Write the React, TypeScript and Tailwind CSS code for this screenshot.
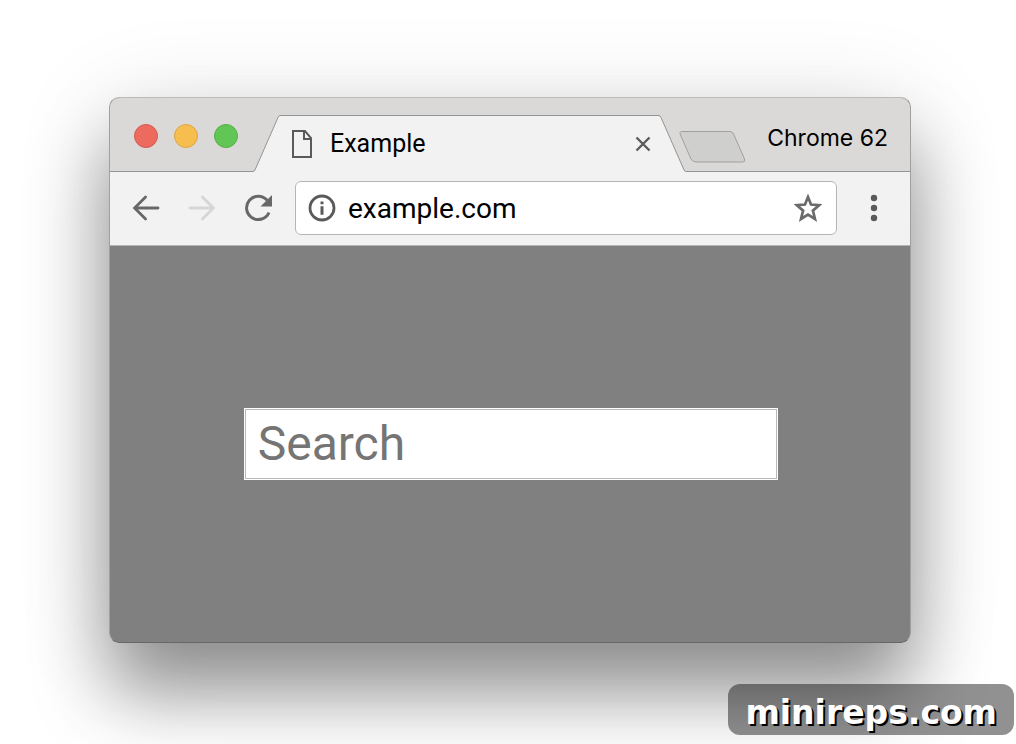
import React from "react";

function TrafficLights() {
  return (
    <div className="flex gap-4 pt-[26px] pl-6">
      <button type="button" aria-label="Close window" className="size-6 rounded-full border border-[#d6584f] bg-[#ed6a5f]" />
      <button type="button" aria-label="Minimize window" className="size-6 rounded-full border border-[#dba542] bg-[#f6be4f]" />
      <button type="button" aria-label="Zoom window" className="size-6 rounded-full border border-[#53b047] bg-[#61c655]" />
    </div>
  );
}

function Tab() {
  return (
    <div className="z-10 -mb-px ml-[15px] flex min-w-0 flex-1 self-end">
      <svg className="h-[57px] w-[27px] shrink-0" viewBox="0 0 27 57" aria-hidden="true">
        <path d="M0 57V56.5Q1.5 56.5 2.4 54.5L25.2 2Q26 .5 27 .5V57Z" fill="#f2f2f2" />
        <path d="M0 56.5Q1.5 56.5 2.4 54L25 2.5Q26 .5 27 .5" fill="none" stroke="#949494" />
      </svg>
      <div className="flex h-[57px] min-w-0 flex-1 items-center border-t border-[#949494] bg-[#f2f2f2] pr-2 pl-3">
        <svg className="h-7 w-5 shrink-0" viewBox="0 0 20 28" fill="none" stroke="#5a5a5a" strokeWidth="2" aria-hidden="true">
          <path d="M1 1H13L19 8V27H1Z" />
          <path d="M12 1V9H19" />
        </svg>
        <span className="ml-[18px] flex-1 truncate font-[Roboto,sans-serif] text-[25px] leading-8 text-black">Example</span>
        <button type="button" aria-label="Close tab" className="size-4">
          <svg viewBox="0 0 16 16" className="size-4" stroke="#5a5a5a" strokeWidth="2.4">
            <path d="M1.5 1.5L14.5 14.5M14.5 1.5L1.5 14.5" />
          </svg>
        </button>
      </div>
      <svg className="h-[57px] w-[27px] shrink-0" viewBox="0 0 27 57" aria-hidden="true">
        <path d="M27 57V56.5Q25.5 56.5 24.6 54.5L1.8 2Q1 .5 0 .5V57Z" fill="#f2f2f2" />
        <path d="M27 56.5Q25.5 56.5 24.6 54L2 2.5Q1 .5 0 .5" fill="none" stroke="#949494" />
      </svg>
    </div>
  );
}

function Toolbar() {
  return (
    <div className="flex h-[74px] items-center border-b border-[#b4b4b4] bg-[#f2f2f2] pr-[25px] pb-0.5 pl-[22px]">
      <button type="button" aria-label="Back" className="size-7">
        <svg viewBox="0 0 28 28" className="size-7" fill="none" stroke="#686868" strokeWidth="2.8" strokeLinecap="round">
          <path d="M26 14H3M13.6 3L2.6 14L13.6 25" />
        </svg>
      </button>
      <button type="button" aria-label="Forward" className="ml-7 size-7">
        <svg viewBox="0 0 28 28" className="size-7" fill="none" stroke="#d6d6d6" strokeWidth="2.8" strokeLinecap="round">
          <path d="M2 14H25M14.4 3L25.4 14L14.4 25" />
        </svg>
      </button>
      <button type="button" aria-label="Reload" className="ml-7 size-7">
        <svg viewBox="0 0 28 28" className="size-7" fill="none">
          <path d="M23.2 6.3A11.7 11.7 0 1 0 25 18.5" stroke="#686868" strokeWidth="3" />
          <path d="M28 1V12.5H16.5Z" fill="#686868" />
        </svg>
      </button>
      <div className="ml-[23px] flex h-[54px] min-w-0 flex-1 items-center rounded-md border border-[#b5b5b5] bg-white pr-[14px] pl-3">
        <svg viewBox="0 0 28 28" className="size-7 shrink-0" fill="none" aria-hidden="true">
          <circle cx="14" cy="14" r="12" stroke="#5a5a5a" strokeWidth="2.8" />
          <path d="M12.5 7.5H15.5V10.3H12.5ZM12.5 12.3H15.5V20.7H12.5Z" fill="#5a5a5a" />
        </svg>
        <input
          type="text"
          aria-label="Address"
          defaultValue="example.com"
          className="ml-3 min-w-0 flex-1 bg-transparent pt-0.5 font-[Roboto,sans-serif] text-[28px] leading-9 text-black outline-none"
        />
        <button type="button" aria-label="Bookmark this page" className="size-7">
          <svg viewBox="0 0 28 28" className="size-7" fill="none" stroke="#6b6b6b" strokeWidth="2.7">
            <path d="M14 3L17 10.5L25.2 11.2L18.9 16.6L21 25L14 20.6L7 25L9.1 16.6L2.8 11.2L11 10.5Z" />
          </svg>
        </button>
      </div>
      <button type="button" aria-label="Menu" className="ml-6 h-7 w-6">
        <svg viewBox="0 0 24 28" className="h-7 w-6" fill="#5a5a5a">
          <circle cx="13" cy="4" r="3.2" />
          <circle cx="13" cy="14" r="3.2" />
          <circle cx="13" cy="24" r="3.2" />
        </svg>
      </button>
    </div>
  );
}

export default function App() {
  return (
    <div className="flex min-h-screen flex-col overflow-hidden bg-white pt-[97px] pr-[105px] pb-[101px] pl-[109px]">
      <main className="flex flex-1 flex-col rounded-[10px] shadow-[0_10px_100px_rgba(0,0,0,0.12),0_50px_75px_rgba(0,0,0,0.40)]">
        <div className="flex flex-1 flex-col overflow-hidden rounded-[10px] border border-[#a0a0a0] border-t-[#bcbab8] border-b-[#676767] bg-[#808080]">
          <header className="flex h-[74px] border-b border-[#949494] bg-[#dbd9d7]">
            <TrafficLights />
            <Tab />
            <button type="button" aria-label="New tab" className="-ml-[7px] mb-2 h-8 w-[67px] self-end">
              <svg viewBox="0 0 67 32" className="h-8 w-[67px]" fill="#cfd0ce" stroke="#a0a09e">
                <path d="M3 .5H51Q53.5 .5 54.5 3L65.5 28Q66.5 31 63.5 31H17Q13.5 31 12 28L1.5 4Q0 .5 3 .5Z" />
              </svg>
            </button>
            <span className="pt-6 pr-[22px] pl-[21px] font-[Inter,sans-serif] text-[23px] leading-8 text-black">Chrome 62</span>
          </header>
          <Toolbar />
          <section className="flex flex-1 items-center justify-center pl-0.5">
            <div className="w-[67%] border border-white bg-white">
              <input
                type="search"
                aria-label="Search"
                placeholder="Search"
                className="block h-[70px] w-full border border-[#b8b8b8] bg-white px-3 pb-0.5 font-[Roboto,sans-serif] text-[48px] leading-[60px] text-black outline-none placeholder:text-[#757575]"
              />
            </div>
          </section>
        </div>
      </main>
      <a
        href="https://minireps.com"
        className="absolute right-[2px] bottom-[9px] rounded-xl bg-black/43 px-[17px] pt-[11px] pb-1 font-['DejaVu_Sans',sans-serif] text-[33px] leading-9 font-bold text-white [text-shadow:2px_2px_0_#000]"
      >
        minireps.com
      </a>
    </div>
  );
}
